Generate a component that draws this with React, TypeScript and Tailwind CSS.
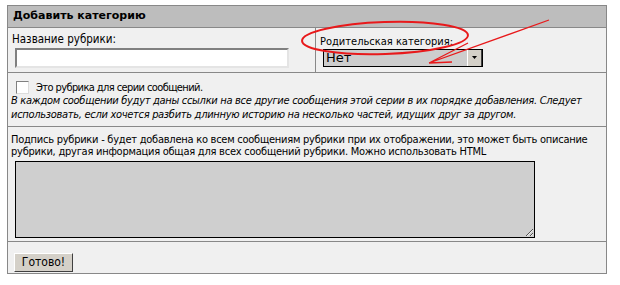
export default function App() {
  return (
    <div className="relative w-[620px] h-[285px] bg-white pt-[5px] pl-[7px] font-['DejaVu_Sans',sans-serif] text-black">
      <div className="w-[600px] border border-[#888888] bg-[#f0f0f0]">
        {/* Header */}
        <div className="h-[22px] bg-[#bdbdbd] border-b border-[#888888] pl-[5px] flex items-center text-[11px] font-bold">
          Добавить категорию
        </div>

        {/* Name + parent */}
        <div className="flex h-[45px] border-b border-[#888888] font-['DejaVu_Sans_Condensed',sans-serif]">
          <div className="w-[308px] border-r border-[#888888] pl-[4px] pt-[5px]">
            <div className="text-[11.5px] leading-[13px]">Название рубрики:</div>
            <input
              type="text"
              className="mt-[2px] ml-[3px] block w-[274px] h-[20px] bg-white border-2 border-t-[#808080] border-l-[#808080] border-b-[#e4e4e4] border-r-[#e4e4e4] outline-none"
            />
          </div>
          <div className="pl-[4px] pt-[7px]">
            <div className="text-[11px] leading-[13px]">Родительская категория:</div>
            <div className="mt-[1px] ml-[3px] flex w-[160px] h-[18px] border border-black bg-[#cdcdcd]">
              <div className="flex-1 text-[13px] leading-[16px] pl-[2px] font-['DejaVu_Sans',sans-serif]">Нет</div>
              <div className="w-[15px] h-[16px] bg-[#d4d0c8] border-l border-[#ffffff] border-r border-r-[#404040] flex items-center justify-center">
                <svg width="7" height="4" viewBox="0 0 7 4">
                  <path d="M1 0h5L3.5 3z" fill="#000" />
                </svg>
              </div>
            </div>
          </div>
        </div>

        {/* Series */}
        <div className="h-[54px] border-b border-[#888888] pl-[3px] pt-[8px] font-['DejaVu_Sans_Condensed',sans-serif]">
          <div className="flex items-center gap-[7px] pl-[5px] text-[11px] leading-[13px] tracking-[-0.6px]">
            <span className="w-[13px] h-[13px] bg-white border border-t-[#808080] border-l-[#808080] border-b-[#dcdcdc] border-r-[#dcdcdc]" />
            Это рубрика для серии сообщений.
          </div>
          <div className="text-[11px] italic leading-[14px] tracking-[-0.3px]">
            В каждом сообщении будут даны ссылки на все другие сообщения этой серии в их порядке добавления. Следует
            использовать, если хочется разбить длинную историю на несколько частей, идущих друг за другом.
          </div>
        </div>

        {/* Caption */}
        <div className="h-[115px] border-b border-[#888888] pl-[3px] pt-[7px] font-['DejaVu_Sans_Condensed',sans-serif]">
          <div className="text-[11px] leading-[12px] tracking-[-0.25px]">
            Подпись рубрики - будет добавлена ко всем сообщениям рубрики при их отображении, это может быть описание
            рубрики, другая информация общая для всех сообщений рубрики. Можно использовать HTML
          </div>
          <textarea className="block mt-[3px] ml-[4px] w-[520px] h-[77px] bg-[#cfcfcf] border border-black outline-none" />
        </div>

        {/* Submit */}
        <div className="h-[31px] pl-[6px] pt-[7px]">
          <button className="h-[19px] w-[59px] bg-[#d4d0c8] border border-t-white border-l-white border-b-[#404040] border-r-[#404040] text-[12px] leading-[15px] font-['DejaVu_Sans_Condensed',sans-serif]">
            Готово!
          </button>
        </div>
      </div>

      {/* Red annotation */}
      <svg className="absolute left-0 top-0 pointer-events-none" width="620" height="285" viewBox="0 0 620 285">
        <ellipse cx="385" cy="38" rx="83" ry="16" fill="none" stroke="#e8191b" strokeWidth="2" transform="rotate(-2 385 38)" />
        <path d="M549 20 L429 63 M429 63 L468 43 M429 63 L452 62" fill="none" stroke="#e8191b" strokeWidth="1.3" />
      </svg>
    </div>
  );
}
